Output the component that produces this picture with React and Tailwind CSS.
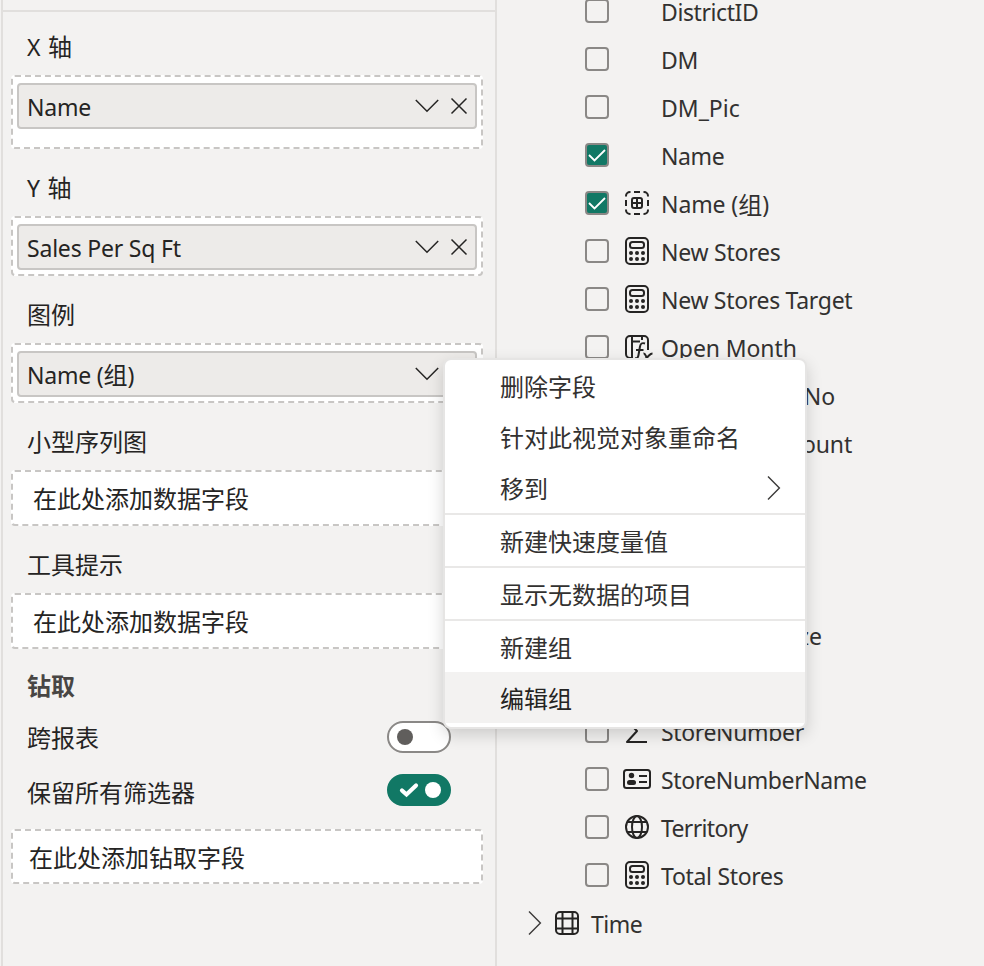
import React, { useState } from 'react';
import clsx from 'clsx';

const fields = [
  { name: 'DistrictID', tracking: 'tracking-[-0.4px]' },
  { name: 'DM', tracking: 'tracking-[-0.2px]' },
  { name: 'DM_Pic', tracking: 'tracking-normal' },
  { name: 'Name', checked: true, tracking: 'tracking-[-0.4px]' },
  { name: 'Name (', cjk: '组', tail: ')', icon: 'group', checked: true, tracking: 'tracking-[-0.1px]' },
  { name: 'New Stores', icon: 'measure', tracking: 'tracking-[-0.24px]' },
  { name: 'New Stores Target', icon: 'measure', tracking: 'tracking-[-0.3px]' },
  { name: 'Open Month', icon: 'calculated', tracking: 'tracking-[-0.1px]' },
  { name: 'Open Month No', icon: 'calculated', tracking: 'tracking-normal' },
  { name: 'Open Store Count', icon: 'measure', tracking: 'tracking-[-0.14px]' },
  { name: 'Open Year', icon: 'calculated', tracking: 'tracking-[-0.2px]' },
  { name: 'OpenDate', tracking: 'tracking-[-0.2px]' },
  { name: 'PostalCode', icon: 'globe', tracking: 'tracking-[-0.2px]' },
  { name: 'SellingAreaSize', icon: 'sum', tracking: 'tracking-[-0.2px]' },
  { name: 'Store Type', tracking: 'tracking-[-0.2px]' },
  { name: 'StoreNumber', icon: 'sum', tracking: 'tracking-[-0.35px]' },
  { name: 'StoreNumberName', icon: 'card', tracking: 'tracking-[-0.4px]' },
  { name: 'Territory', icon: 'globe', tracking: 'tracking-[-0.65px]' },
  { name: 'Total Stores', icon: 'measure', tracking: 'tracking-[-0.3px]' },
];

const menuGroups = [
  [{ label: '删除字段' }, { label: '针对此视觉对象重命名' }, { label: '移到', submenu: true }],
  [{ label: '新建快速度量值' }],
  [{ label: '显示无数据的项目' }],
  [{ label: '新建组' }, { label: '编辑组', active: true }],
];

const cjk = "text-[24px] tracking-normal font-['Noto_Sans_CJK_SC',sans-serif]";

function FieldIcon({ type }) {
  const props = {
    width: 28,
    height: 28,
    viewBox: '0 0 28 28',
    fill: 'none',
    stroke: '#252423',
    strokeWidth: 2,
    className: 'block overflow-visible',
  };

  if (type === 'group') {
    return (
      <svg {...props}>
        <path d="M3 7.500V7a4 4 0 0 1 4-4h.5M11 3h6M20.500 3h.5a4 4 0 0 1 4 4v.5M25 11v6M25 20.500v.5a4 4 0 0 1-4 4h-.5M17 25h-6M7.500 25H7a4 4 0 0 1-4-4v-.5M3 17v-6" />
        <rect x="9" y="9" width="10" height="10" rx="2" />
        <path d="M14 9v10M9 14h10" />
      </svg>
    );
  }
  if (type === 'measure') {
    return (
      <svg {...props}>
        <rect x="3" y="1" width="22" height="26" rx="4" />
        <rect x="7" y="5" width="14" height="6" rx="2.500" />
        <g fill="#252423" stroke="none">
          {[8, 14, 20].map((x) => [16, 22].map((y) => <circle key={`${x}-${y}`} cx={x} cy={y} r="2" />))}
        </g>
      </svg>
    );
  }
  if (type === 'calculated') {
    return (
      <svg {...props}>
        <path d="M9.500 25H7a4 4 0 0 1-4-4V7a4 4 0 0 1 4-4h14a4 4 0 0 1 4 4v10M9 3v22M9 8.500h8M19 3v4" />
        <path d="M22 10.500c-3-1-4.500 0-5 3L15.500 22c-.5 3-1.500 4-3.500 3M13 17h7.500" />
        <path d="M20.500 20.500c2.500-.5 2.500 6 5.500 6M29.500 20.500c-2 0-2.500 1-4.500 3s-2.500 3-4.500 3" />
      </svg>
    );
  }
  if (type === 'card') {
    return (
      <svg {...props}>
        <rect x="1" y="5" width="26" height="18" rx="2.500" />
        <circle cx="8.500" cy="10.500" r="2.700" fill="#252423" stroke="none" />
        <rect x="4" y="15" width="9" height="5" rx="2.500" fill="#252423" stroke="none" />
        <path d="M16 11h8M16 17h8" />
      </svg>
    );
  }
  if (type === 'globe') {
    return (
      <svg {...props}>
        <circle cx="14" cy="14" r="11" />
        <ellipse cx="14" cy="14" rx="5" ry="11" />
        <path d="M4 9h20M4 19h20" />
      </svg>
    );
  }
  if (type === 'sum') {
    return (
      <svg {...props}>
        <path d="M23 4H4l10 10L4 25h20" strokeLinejoin="round" />
      </svg>
    );
  }
  return null;
}

function TableIcon() {
  return (
    <svg width="24" height="24" viewBox="0 0 24 24" fill="none" stroke="#252423" strokeWidth="2">
      <rect x="1" y="1" width="22" height="22" rx="4" />
      <path d="M7.500 1v22M17.500 1v22M1 7.500h22M1 17.500h22" />
    </svg>
  );
}

function ChevronDown() {
  return (
    <svg width="24" height="14" viewBox="0 0 24 14" fill="none" stroke="#252423" strokeWidth="1.500">
      <path d="M.8 1 12 12.200 23.200 1" />
    </svg>
  );
}

function ChevronRight() {
  return (
    <svg width="14" height="24" viewBox="0 0 14 24" fill="none" stroke="#3b3a39" strokeWidth="1.400">
      <path d="M1 .6 12.400 12 1 23.400" />
    </svg>
  );
}

function CloseIcon() {
  return (
    <svg width="18" height="18" viewBox="0 0 18 18" fill="none" stroke="#252423" strokeWidth="1.500">
      <path d="m1.500 1.500 15 15M16.500 1.500l-15 15" />
    </svg>
  );
}

function Checkbox({ checked }) {
  return (
    <span
      className={clsx(
        'flex h-6 w-6 shrink-0 items-center justify-center rounded-[4px] border-2 border-[#8a8886]',
        checked && 'bg-[#117865]'
      )}
    >
      {checked && (
        <svg width="20" height="20" viewBox="0 0 20 20" fill="none" stroke="#fff" strokeWidth="1.800">
          <path d="m2 10 5.500 5.500L18 5" />
        </svg>
      )}
    </span>
  );
}

function Toggle({ on, onClick }) {
  return (
    <button
      onClick={onClick}
      className={clsx(
        'flex h-8 w-16 items-center rounded-full border-2',
        on ? 'justify-end border-[#117865] bg-[#117865] pr-2' : 'justify-start border-[#8a8886] bg-white pl-2'
      )}
    >
      {on && (
        <svg
          className="mr-[6px]"
          width="20"
          height="16"
          viewBox="0 0 20 16"
          fill="none"
          stroke="#fff"
          strokeWidth="4.200"
          strokeLinecap="round"
        >
          <path d="m3 8.500 4.500 4L17 3.500" />
        </svg>
      )}
      <span className={clsx('h-4 w-4 rounded-full', on ? 'bg-white' : 'bg-[#605e5c]')} />
    </button>
  );
}

// 标题行
function Label({ latin, children, className }) {
  return (
    <div className={clsx('flex items-center whitespace-pre pl-[16px] text-[#252423]', className)}>
      {latin && <span className="mr-[1px] mt-[2px] text-[23px] tracking-[0.3px]">{latin} </span>}
      <span className={cjk}>{children}</span>
    </div>
  );
}

function Well({ children, className }) {
  return (
    <div
      className={clsx(
        'w-[472px] rounded-[4px] border-2 border-dashed border-[#c8c6c4] bg-white text-[#252423]',
        className
      )}
    >
      {children}
    </div>
  );
}

function Pill({ children }) {
  return (
    <div className="mx-1 mt-[6px] flex h-[46px] items-center rounded-[4px] border-2 border-[#c8c6c4] bg-[#edebe9] pl-2 pr-[7px]">
      <span className="flex flex-1 items-center pt-[2px] text-[23px] leading-none tracking-[-0.2px]">{children}</span>
      <ChevronDown />
      <span className="ml-[11px]">
        <CloseIcon />
      </span>
    </div>
  );
}

export default function App() {
  const [crossReport, setCrossReport] = useState(false);
  const [keepFilters, setKeepFilters] = useState(true);

  return (
    <div className="relative flex h-[966px] w-[984px] overflow-hidden bg-[#f3f2f1] font-['Noto_Sans','Noto_Sans_CJK_SC',sans-serif] leading-none">
      {/* 字段窗格 */}
      <section className="ml-[1px] w-[496px] shrink-0 border-x-2 border-[#e1dfdd]">
        <div className="h-3 border-b-2 border-[#e1dfdd]" />
        <div className="pl-2">
          <Label latin="X" className="h-[63px] pt-[5px]">轴</Label>
          <Well className="h-[74px]">
            <Pill>Name</Pill>
          </Well>
          <Label latin="Y" className="h-[67px] pt-[9px]">轴</Label>
          <Well className="h-[60px]">
            <Pill>Sales Per Sq Ft</Pill>
          </Well>
          <Label className="h-[67px] pt-[9px]">图例</Label>
          <Well className="h-[60px]">
            <Pill>
              <span className="whitespace-pre">Name (</span>
              <span className={clsx(cjk, '-mt-[2px]')}>组</span>)
            </Pill>
          </Well>
          <Label className="h-[67px] pt-[9px]">小型序列图</Label>
          <Well className="flex h-[56px] items-center pl-5">
            <span className={cjk}>在此处添加数据字段</span>
          </Well>
          <Label className="h-[67px] pt-[9px]">工具提示</Label>
          <Well className="flex h-[56px] items-center pl-5">
            <span className={cjk}>在此处添加数据字段</span>
          </Well>

          <Label className="h-[72px] font-bold !text-[#484644]">钻取</Label>
          <div className="flex h-[32px] w-[440px] items-center justify-between">
            <Label>跨报表</Label>
            <Toggle on={crossReport} onClick={() => setCrossReport(!crossReport)} />
          </div>
          <div className="mt-[21px] flex h-[32px] w-[440px] items-center justify-between">
            <Label className="pt-1">保留所有筛选器</Label>
            <Toggle on={keepFilters} onClick={() => setKeepFilters(!keepFilters)} />
          </div>
          <Well className="mt-[23px] flex h-[55px] items-center pl-4">
            <span className={cjk}>在此处添加钻取字段</span>
          </Well>
        </div>
      </section>

      {/* 数据窗格 */}
      <section className="-mt-[13px] flex-1 text-[23px] text-[#323130]">
        {fields.map((field) => (
          <div key={field.name} className="flex h-12 items-center pl-[88px]">
            <Checkbox checked={field.checked} />
            <span className="ml-[14px] w-[28px] shrink-0">
              <FieldIcon type={field.icon} />
            </span>
            <span className={clsx('ml-[10px] flex items-center whitespace-pre pt-[3px]', field.tracking)}>
              {field.name}
              {field.cjk && <span className={clsx(cjk, '-mt-[2px]')}>{field.cjk}</span>}
              {field.tail}
            </span>
          </div>
        ))}
        <div className="flex h-12 items-center pl-[31px]">
          <ChevronRight />
          <span className="ml-[13px]">
            <TableIcon />
          </span>
          <span className="ml-3 pt-[3px] tracking-[-0.5px]">Time</span>
        </div>
      </section>

      {/* 右键菜单 */}
      <div className="absolute left-[443px] top-[358px] h-[371px] w-[364px] overflow-hidden rounded-[8px] border-2 border-[#e6e5e4] bg-white shadow-[0_6px_16px_rgba(0,0,0,0.16)]">
        {menuGroups.map((group, i) => (
          <div key={i} className={clsx(i > 0 && 'border-t-2 border-[#e9e8e7]')}>
            {group.map((item) => (
              <div
                key={item.label}
                className={clsx(
                  'flex h-[51px] items-center justify-between pl-[55px] pr-[24px] pt-[1px]',
                  item.active ? 'bg-[#f3f2f1] text-[#252423]' : 'text-[#323130]'
                )}
              >
                <span className={cjk}>{item.label}</span>
                {item.submenu && <ChevronRight />}
              </div>
            ))}
          </div>
        ))}
      </div>
    </div>
  );
}
